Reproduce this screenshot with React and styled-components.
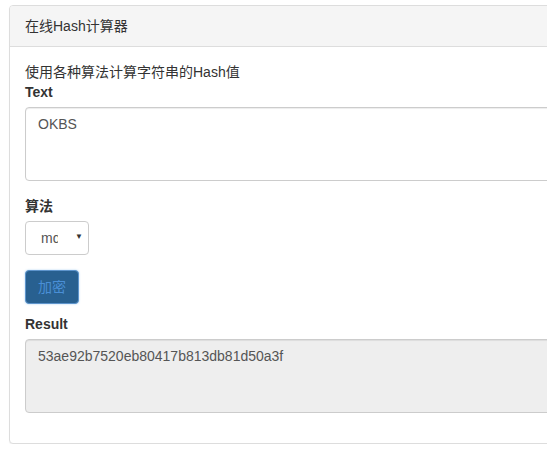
import React from 'react';
import styled, { createGlobalStyle } from 'styled-components';

const GlobalStyle = createGlobalStyle`
  html, body {
    margin: 0;
    padding: 0;
    overflow: hidden;
    background: #fff;
  }
  body {
    font-family: "Liberation Sans", Arial, "Noto Sans CJK SC", sans-serif;
    font-size: 14px;
    line-height: 20px;
    color: #333;
  }
`;

const Page = styled.div`
  padding: 5px 0 0 9px;
  width: 760px;
`;

const Panel = styled.div`
  background: #fff;
  border: 1px solid #ddd;
  border-radius: 4px;
  box-shadow: 0 1px 1px rgba(0, 0, 0, 0.05);
`;

const PanelHeading = styled.div`
  padding: 10px 15px;
  background: #f5f5f5;
  border-bottom: 1px solid #ddd;
  border-radius: 3px 3px 0 0;
  color: #333;
`;

const PanelBody = styled.div`
  padding: 15px;
`;

const Intro = styled.p`
  margin: 0;
`;

const FormGroup = styled.div`
  margin-bottom: ${(p) => p.$gap || 15}px;
`;

const Label = styled.label`
  display: inline-block;
  margin-bottom: 5px;
  font-weight: 700;
`;

const TextArea = styled.textarea`
  display: block;
  box-sizing: border-box;
  width: 100%;
  height: 74px;
  padding: 6px 12px;
  border: 1px solid #ccc;
  border-radius: 4px;
  box-shadow: inset 0 1px 1px rgba(0, 0, 0, 0.075);
  font-family: inherit;
  font-size: 14px;
  line-height: 20px;
  color: #555;
  background: ${(p) => (p.readOnly ? '#eee' : '#fff')};
  resize: none;
  outline: none;
`;

const SelectWrap = styled.div`
  position: relative;
  width: 64px;
`;

const Select = styled.select`
  appearance: none;
  -webkit-appearance: none;
  box-sizing: border-box;
  width: 64px;
  height: 34px;
  padding: 6px 30px 6px 15px;
  border: 1px solid #ccc;
  border-radius: 4px;
  background: #fff;
  font-family: inherit;
  font-size: 14px;
  color: #555;
  outline: none;
`;

const Caret = styled.span`
  position: absolute;
  left: 50px;
  top: 11px;
  font-size: 8px;
  line-height: 10px;
  color: #333;
  pointer-events: none;
`;

const Button = styled.button`
  box-sizing: border-box;
  height: 34px;
  padding: 6px 12px;
  border: 1px solid #5d94cc;
  border-radius: 4px;
  background: #286090;
  box-shadow: 0 0 2px rgba(102, 175, 233, 0.6);
  font-family: inherit;
  font-size: 14px;
  line-height: 20px;
  color: #4a8fd6;
`;

export default function App() {
  return (
    <>
      <GlobalStyle />
      <Page>
        <Panel>
          <PanelHeading>在线Hash计算器</PanelHeading>
          <PanelBody>
            <Intro>使用各种算法计算字符串的Hash值</Intro>
            <FormGroup>
              <Label>Text</Label>
              <TextArea defaultValue="OKBS" />
            </FormGroup>
            <FormGroup>
              <Label>算法</Label>
              <SelectWrap>
                <Select defaultValue="md5">
                  <option value="md5">md5</option>
                  <option value="sha1">sha1</option>
                  <option value="sha256">sha256</option>
                </Select>
                <Caret>▼</Caret>
              </SelectWrap>
            </FormGroup>
            <FormGroup $gap={10}>
              <Button>加密</Button>
            </FormGroup>
            <FormGroup>
              <Label>Result</Label>
              <TextArea readOnly defaultValue="53ae92b7520eb80417b813db81d50a3f" />
            </FormGroup>
          </PanelBody>
        </Panel>
      </Page>
    </>
  );
}
